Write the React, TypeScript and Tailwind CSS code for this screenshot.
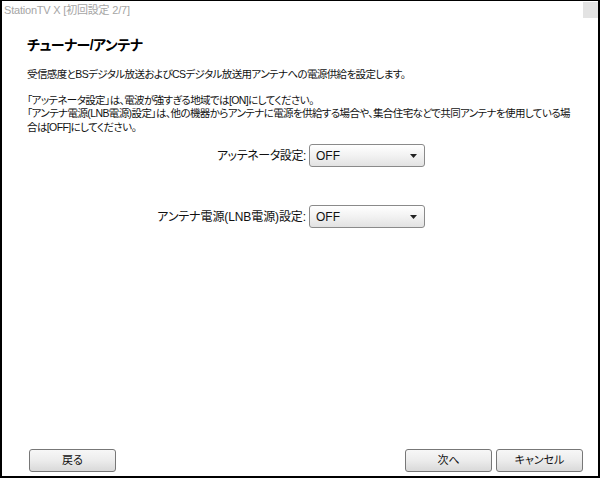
import React from "react";

const font = "font-['Liberation_Sans','Noto_Sans_CJK_JP',sans-serif] [font-feature-settings:'palt']";

const Select: React.FC<{ value: string }> = ({ value }) => (
  <div className="w-[116px] h-[23px] flex items-center justify-between pl-[6px] pr-[7px] border border-[#8a8a8a] rounded-[3px] bg-linear-to-b from-white via-[#f2f2f2] to-[#e2e2e2]">
    <span className="text-[12px] text-[#111]">{value}</span>
    <svg width="7" height="4" viewBox="0 0 7 4">
      <path d="M0 0h7L3.5 4z" fill="#222" />
    </svg>
  </div>
);

const Button: React.FC<{ label: string }> = ({ label }) => (
  <button className="w-[87px] h-[23px] flex items-center justify-center text-[11px] text-[#111] border border-[#777] rounded-[3px] bg-linear-to-b from-[#f7f7f7] via-[#ececec] to-[#d9d9d9]">
    {label}
  </button>
);

const App: React.FC = () => {
  return (
    <div className={`w-[600px] h-[478px] bg-white border-t border-l-2 border-r-2 border-b-2 border-black flex flex-col ${font}`}>
      {/* title bar */}
      <div className="h-[19px] flex items-start justify-between pl-[2px]">
        <span className="text-[11px] leading-[18px] tracking-[-0.2px] text-[#a5a5a5]">StationTV X [初回設定 2/7]</span>
        <div className="w-[15px] h-[16px] mt-[1px] bg-[#e3e3e3]" />
      </div>

      <div className="px-[25px] pt-[15px]">
        <h1 className="text-[14px] font-bold leading-[20px] text-black tracking-[-0.5px]">チューナー/アンテナ</h1>
        <p className="mt-[13px] text-[10.5px] leading-[13.5px] tracking-[-0.6px] text-[#111]">
          受信感度とBSデジタル放送およびCSデジタル放送用アンテナへの電源供給を設定します。
        </p>
        <p className="mt-[12px] text-[10.5px] leading-[13.5px] tracking-[-0.6px] text-[#111]">
          「アッテネータ設定」は、電波が強すぎる地域では[ON]にしてください。
          <br />
          「アンテナ電源(LNB電源)設定」は、他の機器からアンテナに電源を供給する場合や、集合住宅などで共同アンテナを使用している場合は[OFF]にしてください。
        </p>

        <div className="w-[398px] mt-[10px] flex flex-col items-end gap-[38px]">
          <div className="flex items-center gap-[3px]">
            <span className="text-[12px] tracking-[-0.4px] text-[#111]">アッテネータ設定:</span>
            <Select value="OFF" />
          </div>
          <div className="flex items-center gap-[3px]">
            <span className="text-[12px] tracking-[-0.1px] text-[#111]">アンテナ電源(LNB電源)設定:</span>
            <Select value="OFF" />
          </div>
        </div>
      </div>

      <div className="flex-1" />

      <div className="flex items-center justify-between pl-[27px] pr-[15px] pb-[4px]">
        <Button label="戻る" />
        <div className="flex gap-[4px]">
          <Button label="次へ" />
          <Button label="キャンセル" />
        </div>
      </div>
    </div>
  );
};

export default App;
